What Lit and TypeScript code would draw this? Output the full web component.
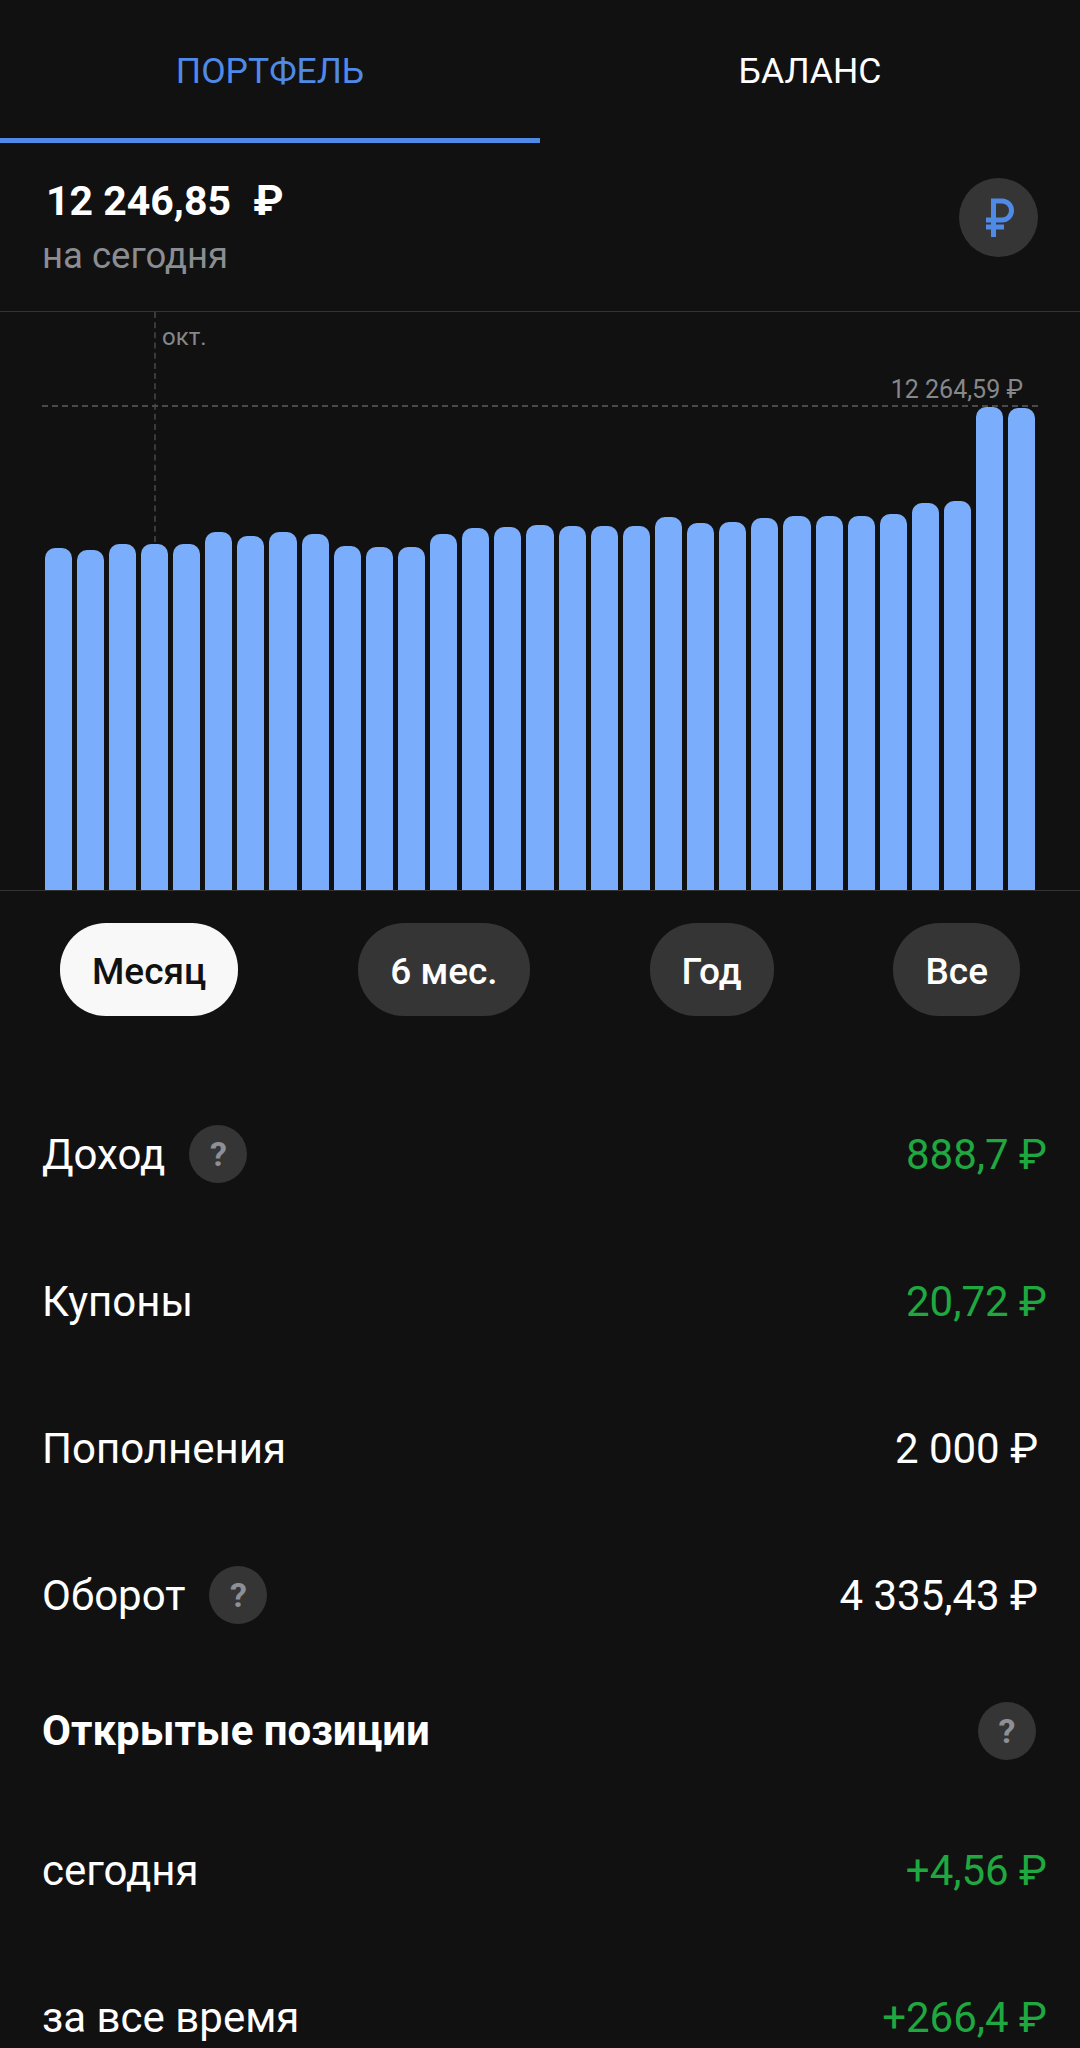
import { LitElement, html, css } from "lit";
import { customElement } from "lit/decorators.js";

// top edge of every bar, in page px
const BAR_TOPS = [
  548, 550, 544, 544, 544, 532, 536, 532, 534, 546, 547, 547, 534, 528, 527, 525,
  526, 526, 526, 517, 523, 522, 518, 516, 516, 516, 514, 503, 501, 407, 408,
];
const CHART_BOTTOM = 890;

const PILLS = ["Месяц", "6 мес.", "Год", "Все"];

@customElement("app-root")
export class AppRoot extends LitElement {
  static styles = css`
    :host {
      display: block;
      width: 1080px;
      height: 2048px;
      overflow: hidden;
      background: #111112;
      color: #fff;
      font-family: Roboto, "Noto Sans", sans-serif;
    }

    .tabs {
      display: flex;
      height: 143px;
    }
    .tab {
      flex: 1;
      text-align: center;
      font-size: 35.5px;
      line-height: 142px;
    }
    .tab.active {
      height: 138px;
      color: #4f8ae6;
      border-bottom: 5px solid #4f8ae6;
    }

    .summary {
      height: 168px;
      box-sizing: border-box;
      padding: 32px 42px 0 42px;
      display: flex;
      justify-content: space-between;
    }
    .total {
      font-size: 41px;
      font-weight: 700;
      line-height: 50px;
      padding-left: 4px;
    }
    .total span {
      margin-left: 12px;
      font-size: 43px;
    }
    .today {
      font-size: 36.5px;
      line-height: 44px;
      margin-top: 8px;
      color: #8b8d90;
    }
    .round {
      width: 79px;
      height: 79px;
      margin-top: 3px;
      border-radius: 50%;
      background: #353535;
      display: flex;
      align-items: center;
      justify-content: center;
    }

    .chart {
      position: relative;
      height: 580px;
      border-top: 1px solid #333;
      border-bottom: 1px solid #333;
      box-sizing: border-box;
    }
    .bars {
      position: absolute;
      left: 44.5px;
      bottom: 0;
      display: flex;
      align-items: flex-end;
      gap: 5px;
    }
    .bar {
      width: 27.13px;
      background: #7aaefc;
      border-radius: 10px 10px 0 0;
    }
    .v-guide {
      position: absolute;
      left: 154px;
      top: 0;
      height: 230px;
      border-left: 2px dashed #3a3a3a;
    }
    .h-guide {
      position: absolute;
      left: 42px;
      width: 996px;
      top: 93px;
      border-top: 2px dashed #4a4a4a;
    }
    .month {
      position: absolute;
      left: 162px;
      top: 11px;
      font-size: 24px;
      color: #85878a;
    }
    .peak {
      position: absolute;
      right: 57px;
      top: 63px;
      font-size: 25px;
      color: #85878a;
    }

    .pills {
      display: flex;
      justify-content: space-between;
      padding: 32px 60px 0 60px;
    }
    .pill {
      height: 93px;
      border-radius: 46px;
      padding: 0 32px;
      background: #353535;
      font-size: 37px;
      font-weight: 500;
      line-height: 97px;
    }
    .pill.active {
      background: #f8f8f8;
      color: #111;
    }

    .rows {
      padding: 65px 42px 0 42px;
    }
    .row {
      height: 147px;
      display: flex;
      align-items: center;
      justify-content: space-between;
      font-size: 42px;
    }
    .row.head {
      height: 123px;
      margin-bottom: 5px;
      font-weight: 700;
    }
    .row.head .help {
      margin-right: 2px;
    }
    .label {
      display: flex;
      align-items: center;
      gap: 24px;
    }
    .label .help {
      margin-top: -2px;
    }
    .green {
      color: #1fa83f;
      margin-right: -9px;
    }
    .help {
      width: 58px;
      height: 58px;
      border-radius: 50%;
      background: #353535;
      color: #8e9096;
      font-size: 34px;
      font-weight: 700;
      display: flex;
      align-items: center;
      justify-content: center;
    }
  `;

  render() {
    const help = html`<div class="help">?</div>`;
    return html`
      <div class="tabs">
        <div class="tab active">ПОРТФЕЛЬ</div>
        <div class="tab">БАЛАНС</div>
      </div>

      <div class="summary">
        <div>
          <div class="total">12 246,85 <span>₽</span></div>
          <div class="today">на сегодня</div>
        </div>
        <div class="round">
          <svg width="30" height="40" viewBox="0 0 30 40" fill="none" stroke="#4f8ae6" stroke-width="5">
            <path d="M9.500 39V3H18a9.500 9.500 0 0 1 0 19H2" />
            <path d="M2 29H20" />
          </svg>
        </div>
      </div>

      <div class="chart">
        <div class="v-guide"></div>
        <div class="h-guide"></div>
        <div class="month">окт.</div>
        <div class="peak">12 264,59 ₽</div>
        <div class="bars">
          ${BAR_TOPS.map(
            (top) => html`<div class="bar" style="height:${CHART_BOTTOM - top}px"></div>`
          )}
        </div>
      </div>

      <div class="pills">
        ${PILLS.map(
          (p, i) => html`<div class="pill ${i === 0 ? "active" : ""}">${p}</div>`
        )}
      </div>

      <div class="rows">
        <div class="row">
          <div class="label">Доход ${help}</div>
          <div class="green">888,7 ₽</div>
        </div>
        <div class="row">
          <div class="label">Купоны</div>
          <div class="green">20,72 ₽</div>
        </div>
        <div class="row">
          <div class="label">Пополнения</div>
          <div>2 000 ₽</div>
        </div>
        <div class="row">
          <div class="label">Оборот ${help}</div>
          <div>4 335,43 ₽</div>
        </div>
        <div class="row head">
          <div class="label">Открытые позиции</div>
          ${help}
        </div>
        <div class="row">
          <div class="label">сегодня</div>
          <div class="green">+4,56 ₽</div>
        </div>
        <div class="row">
          <div class="label">за все время</div>
          <div class="green">+266,4 ₽</div>
        </div>
      </div>
    `;
  }
}
